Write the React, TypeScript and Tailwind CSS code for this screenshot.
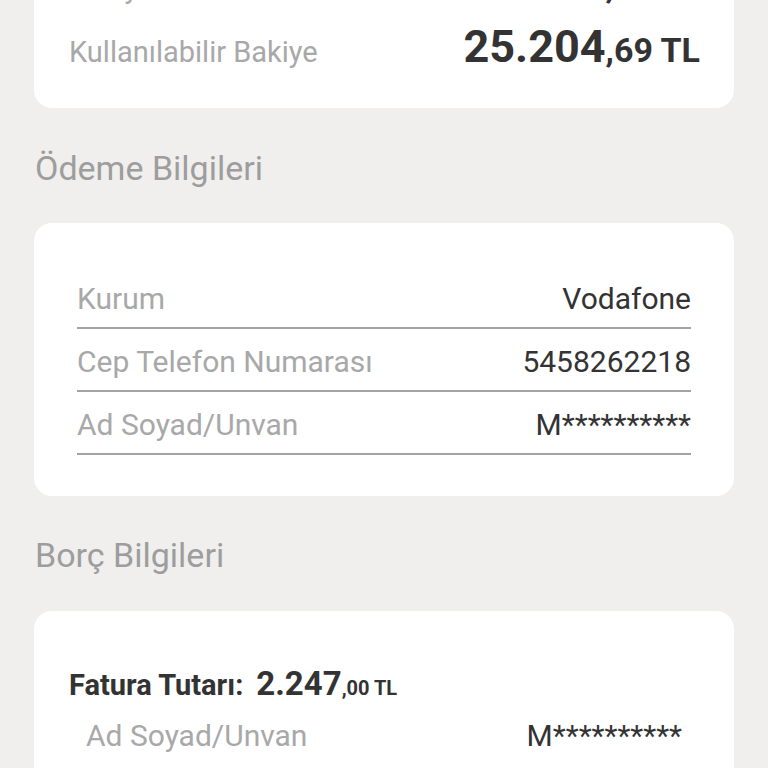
import React from "react";

const rows = [
  { label: "Kurum", value: "Vodafone" },
  { label: "Cep Telefon Numarası", value: "5458262218" },
  { label: "Ad Soyad/Unvan", value: "M**********" },
];

function Amount({ main, rest, big }: { main: string; rest: string; big?: boolean }) {
  return (
    <span className="font-bold text-[#333333] whitespace-nowrap">
      <span className={big ? "text-[45px]" : "text-[33px]"}>{main}</span>
      <span className={big ? "text-[34px]" : "text-[20px]"}>{rest}</span>
    </span>
  );
}

export default function App() {
  return (
    <div className="min-h-screen bg-[#f0efee] font-['Roboto',sans-serif] overflow-hidden px-[34px] pb-10">
      <div className="-mt-[79px] bg-white rounded-[18px] pt-[30px] pb-[29px] pl-[35px] pr-[34px]">
        <div className="flex items-baseline justify-between h-[64px] leading-[64px]">
          <span className="text-[29px] text-[#a8a8a8]">Bakiye</span>
          <Amount main="31.204" rest=",69 TL" big />
        </div>
        <div className="flex items-baseline justify-between h-[64px] leading-[64px]">
          <span className="text-[29px] text-[#a8a8a8]">Kullanılabilir Bakiye</span>
          <Amount main="25.204" rest=",69 TL" big />
        </div>
      </div>

      <h2 className="mt-[42px] pl-px text-[34px] leading-[36px] text-[#9d9d9d]">Ödeme Bilgileri</h2>

      <div className="mt-[37px] bg-white rounded-[18px] pt-[43px] pb-[41px] px-[43px]">
        {rows.map((row) => (
          <div
            key={row.label}
            className="flex justify-between items-baseline pt-[15px] pb-[10px] border-b-2 border-[#a3a3a3] text-[30px] leading-[36px]"
          >
            <span className="text-[#a8a8a8]">{row.label}</span>
            <span className="text-[#333333]">{row.value}</span>
          </div>
        ))}
      </div>

      <h2 className="mt-[41px] pl-px text-[34px] leading-[36px] text-[#9d9d9d]">Borç Bilgileri</h2>

      <div className="mt-[38px] bg-white rounded-[18px] pt-[55px] pb-[40px] pl-[35px] pr-[52px]">
        <div className="flex items-baseline gap-[13px] leading-[36px]">
          <span className="text-[29px] font-bold text-[#333333]">Fatura Tutarı:</span>
          <Amount main="2.247" rest=",00 TL" />
        </div>
        <div className="mt-[10px] pl-[17px] flex items-baseline justify-between text-[30px] leading-[36px]">
          <span className="text-[#a8a8a8]">Ad Soyad/Unvan</span>
          <span className="text-[#333333]">M**********</span>
        </div>
      </div>
    </div>
  );
}
